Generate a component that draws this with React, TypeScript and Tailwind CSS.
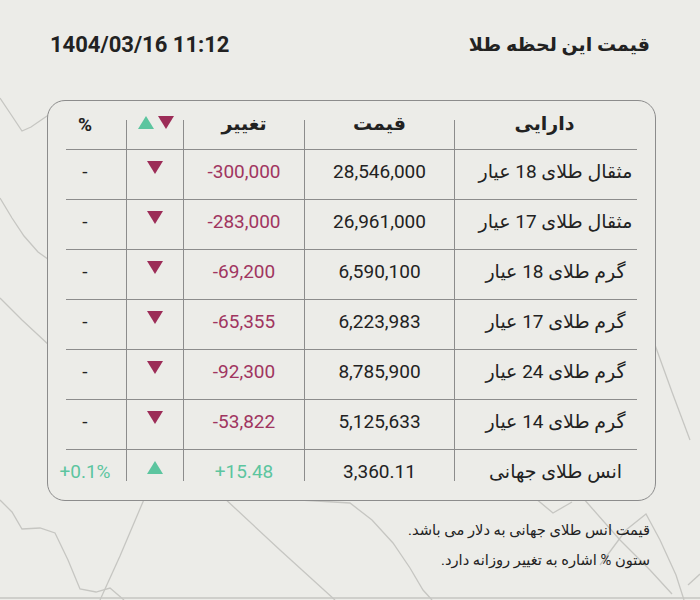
type Row = {
  name: string;
  price: string;
  change: string;
  pct: string;
  up: boolean;
};

const rows: Row[] = [
  { name: "مثقال طلای 18 عیار", price: "28,546,000", change: "-300,000", pct: "-", up: false },
  { name: "مثقال طلای 17 عیار", price: "26,961,000", change: "-283,000", pct: "-", up: false },
  { name: "گرم طلای 18 عیار", price: "6,590,100", change: "-69,200", pct: "-", up: false },
  { name: "گرم طلای 17 عیار", price: "6,223,983", change: "-65,355", pct: "-", up: false },
  { name: "گرم طلای 24 عیار", price: "8,785,900", change: "-92,300", pct: "-", up: false },
  { name: "گرم طلای 14 عیار", price: "5,125,633", change: "-53,822", pct: "-", up: false },
  { name: "انس طلای جهانی", price: "3,360.11", change: "+15.48", pct: "+0.1%", up: true },
];

const font = "font-['Roboto','DejaVu_Sans',sans-serif]";

const Triangle = ({ up, className = "" }: { up: boolean; className?: string }) => (
  <svg width="16" height="13" viewBox="0 0 16 13" className={className}>
    {up ? (
      <polygon points="8,0 16,13 0,13" fill="#5cc59f" />
    ) : (
      <polygon points="0,0 16,0 8,13" fill="#9c2c57" />
    )}
  </svg>
);

const Background = () => (
  <svg
    className="absolute inset-0"
    width="700"
    height="600"
    viewBox="0 0 700 600"
    fill="none"
    stroke="#c6c6c2"
    strokeWidth="1.3"
  >
    <polyline points="0,98 10,113 22,131 31,127 47,116 60,106" />
    <polyline points="0,198 12,218 24,236 38,252 52,262" />
    <polyline points="0,298 22,320 50,346" />
    <polyline points="0,500 12,512 22,529 40,528 55,533 68,560 80,589 96,592 110,588 124,600" />
    <polyline points="148,490 120,556 100,600" />
    <polyline points="222,496 280,550 335,600" />
    <polyline points="300,500 350,503 372,520 393,543 410,568 423,590 432,600" />
    <polyline points="535,498 553,513 572,502" />
    <polyline points="583,498 620,540 650,570 672,594" />
    <polyline points="600,565 626,530 646,514 660,540 676,575 684,600" />
    <polyline points="640,300 655,345 672,392 690,440" />
    <polyline points="688,585 700,574" />
    <line x1="0" y1="598" x2="700" y2="598" />
  </svg>
);

export default function App() {
  return (
    <div className={`relative h-[600px] w-[700px] overflow-hidden bg-[#ecece8] ${font}`}>
      <Background />
      <div className="relative flex flex-col">
        <header className="flex items-center justify-between px-[50px] pt-[31px]">
          <div className="text-[22px] font-bold leading-[28px] text-[#222]">1404/03/16 11:12</div>
          <div dir="rtl" className="text-[19px] font-bold leading-[28px] text-[#222]">
            قیمت این لحظه طلا
          </div>
        </header>

        <section className="ml-[47px] mt-[41px] h-[401px] w-[609px] rounded-[18px] border border-[#8c8c8c] bg-[#ecece8] px-[18px] pt-[19px]">
          {/* header row */}
          <div className="flex h-[30px] border-b border-[#8c8c8c] text-[19px] font-bold text-[#222]">
            <div className="flex w-[61px] justify-center border-r border-[#8c8c8c] pr-[22px]">
              <span className="-mt-[5px] leading-[20px]">%</span>
            </div>
            <div className="flex w-[57px] justify-center gap-[4px] border-r border-[#8c8c8c] pl-[2px]">
              <Triangle up className="-mt-[4px]" />
              <Triangle up={false} className="-mt-[4px]" />
            </div>
            <div className="flex w-[121px] justify-center border-r border-[#8c8c8c]">
              <span className="-mt-[6px] leading-[20px]">تغییر</span>
            </div>
            <div className="flex w-[150px] justify-center border-r border-[#8c8c8c]">
              <span className="-mt-[6px] leading-[20px]">قیمت</span>
            </div>
            <div className="flex w-[181px] justify-center pr-[2px]">
              <span className="-mt-[6px] leading-[20px]">دارایی</span>
            </div>
          </div>

          {/* body */}
          {rows.map((r, i) => {
            const last = i === rows.length - 1;
            const tone = r.up ? "text-[#5cc59f]" : "text-[#a03560]";
            const cell = last ? "items-start pt-[12px]" : "items-center pb-[5px]";
            return (
              <div
                key={r.name}
                className={`flex text-[19px] leading-[20px] ${
                  last ? "h-[31px]" : "h-[50px] border-b border-[#8c8c8c]"
                }`}
              >
                <div
                  className={`flex w-[61px] justify-center whitespace-nowrap border-r border-[#8c8c8c] pr-[22px] ${cell} ${
                    r.up ? "text-[#5cc59f]" : "text-[#222]"
                  }`}
                >
                  {r.pct}
                </div>
                <div className="flex w-[57px] justify-center border-r border-[#8c8c8c] pt-[11px]">
                  <Triangle up={r.up} />
                </div>
                <div className={`flex w-[121px] justify-center border-r border-[#8c8c8c] ${cell} ${tone}`}>
                  {r.change}
                </div>
                <div className={`flex w-[150px] justify-center border-r border-[#8c8c8c] text-[#222] ${cell}`}>
                  {r.price}
                </div>
                <div
                  dir="rtl"
                  className={`flex w-[181px] justify-center whitespace-nowrap pl-[20px] text-[#222] ${cell}`}
                >
                  {r.name}
                </div>
              </div>
            );
          })}
        </section>

        <div dir="rtl" className="mt-[14px] pr-[50px] text-[14.7px] leading-[30px] text-[#222]">
          <p>قیمت انس طلای جهانی به دلار می باشد.</p>
          <p>ستون % اشاره به تغییر روزانه دارد.</p>
        </div>
      </div>
    </div>
  );
}
